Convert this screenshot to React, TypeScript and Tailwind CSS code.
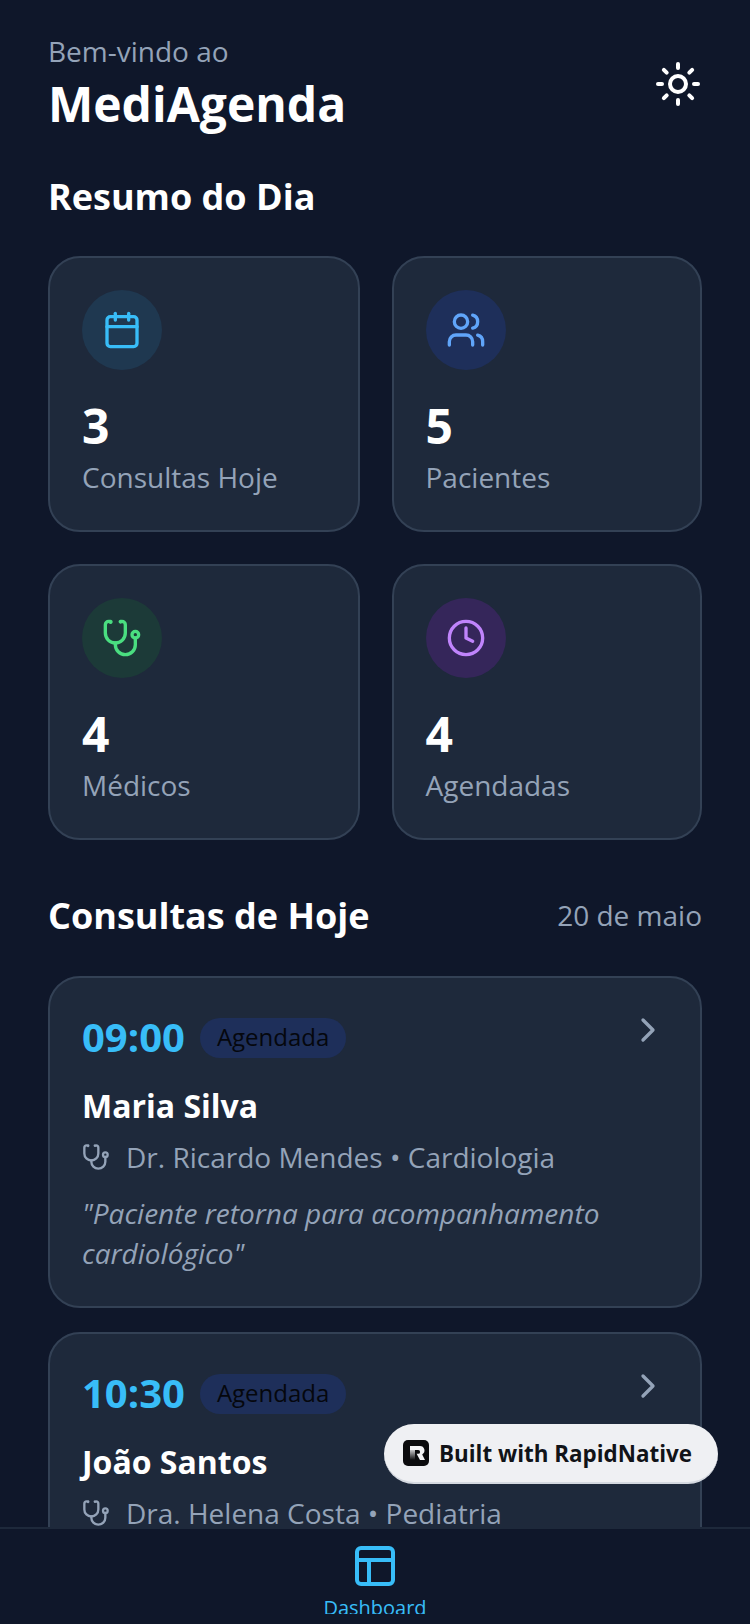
import { Calendar, ChevronRight, Clock, PanelsTopLeft, Sun, Users } from 'lucide-react';
import type { ReactNode } from 'react';

function StethoscopeIcon({ className }: { className: string }) {
  return (
    <svg viewBox="0 0 24 24" fill="none" stroke="currentColor" strokeWidth="2" strokeLinecap="round" strokeLinejoin="round" className={className}>
      <path d="M4.8 2.3A.3.3 0 1 0 5 2H4a2 2 0 0 0-2 2v5a6 6 0 0 0 6 6a6 6 0 0 0 6-6V4a2 2 0 0 0-2-2h-1a.2.2 0 1 0 .3.3" />
      <path d="M8 15v1a6 6 0 0 0 6 6a6 6 0 0 0 6-6v-4" />
      <circle cx="20" cy="10" r="2" />
    </svg>
  );
}

interface StatCardProps {
  icon: ReactNode;
  circle: string;
  value: string;
  label: string;
}

function StatCard({ icon, circle, value, label }: StatCardProps) {
  return (
    <div className="rounded-[32px] border-2 border-[#334155] bg-[#1e293b] p-8">
      <div className={`mb-6 flex h-20 w-20 items-center justify-center rounded-full ${circle}`}>{icon}</div>
      <div className="text-[48px] leading-[64px] font-bold text-white">{value}</div>
      <div className="pb-px text-[28px] leading-[39px] text-[#94a3b8]">{label}</div>
    </div>
  );
}

interface ConsultaProps {
  time: string;
  name: string;
  doctor: string;
  note: string;
}

function ConsultaCard({ time, name, doctor, note }: ConsultaProps) {
  return (
    <div className="mb-6 shrink-0 rounded-[32px] border-2 border-[#334155] bg-[#1e293b] p-8">
      <div className="flex items-start justify-between">
        <div className="flex h-14 items-center gap-[15px]">
          <span className="pb-[3px] text-[40px] leading-[53px] font-bold text-[#38bdf8]">{time}</span>
          <span className="rounded-full bg-[#1e2f5a] px-[17px] pb-[2px] text-[24px] leading-[38px] text-[#05070d]">Agendada</span>
        </div>
        <ChevronRight className="h-10 w-10 text-[#94a3b8]" />
      </div>
      <div className="mt-4 text-[32px] leading-[48px] font-bold text-white">{name}</div>
      <div className="mt-[7px] flex items-center gap-4 text-[28px] leading-[40px] text-[#94a3b8]">
        <StethoscopeIcon className="h-7 w-7" />
        <span>{doctor}</span>
      </div>
      <p className="mt-4 mb-px text-[28px] leading-[40px] text-[#94a3b8] italic">{note}</p>
    </div>
  );
}

export default function App() {
  return (
    <div className="relative flex h-[1624px] w-[750px] flex-col overflow-hidden bg-[#0f172a] font-['Open_Sans',sans-serif]">
      <div className="flex-1 overflow-hidden px-12 pt-[31px]">
        <div className="flex items-center justify-between">
          <div>
            <div className="text-[28px] leading-[40px] text-[#94a3b8]">Bem-vindo ao</div>
            <h1 className="mt-px text-[48px] leading-[64px] font-bold text-white">MediAgenda</h1>
          </div>
          <Sun className="h-12 w-12 text-white" />
        </div>

        <h2 className="mt-[35px] mb-[33px] text-[36px] leading-[52px] font-bold text-white">Resumo do Dia</h2>

        <div className="grid grid-cols-[311.5px_310.5px] gap-8">
          <StatCard icon={<Calendar className="h-10 w-10 text-[#38bdf8]" />} circle="bg-[#1f3850]" value="3" label="Consultas Hoje" />
          <StatCard icon={<Users className="h-10 w-10 text-[#60a5fa]" />} circle="bg-[#1e2f5a]" value="5" label="Pacientes" />
          <StatCard icon={<StethoscopeIcon className="h-10 w-10 text-[#4ade80]" />} circle="bg-[#1c3a38]" value="4" label="Médicos" />
          <StatCard icon={<Clock className="h-10 w-10 text-[#c084fc]" />} circle="bg-[#35265a]" value="4" label="Agendadas" />
        </div>

        <div className="mt-12 mb-8 flex items-center justify-between">
          <h2 className="text-[36px] leading-[56px] font-bold text-white">Consultas de Hoje</h2>
          <span className="pb-[2px] text-[28px] leading-[38px] text-[#94a3b8]">20 de maio</span>
        </div>

        <ConsultaCard
          time="09:00"
          name="Maria Silva"
          doctor="Dr. Ricardo Mendes • Cardiologia"
          note={'"Paciente retorna para acompanhamento cardiológico"'}
        />
        <ConsultaCard
          time="10:30"
          name="João Santos"
          doctor="Dra. Helena Costa • Pediatria"
          note={'"Consulta de rotina"'}
        />
      </div>

      <div className="flex h-[97px] shrink-0 flex-col items-center overflow-hidden border-t-2 border-[#1e293b] bg-[#0f172a] pt-[13px]">
        <PanelsTopLeft className="h-12 w-12 shrink-0 text-[#38bdf8]" />
        <span className="mt-1 block h-5 shrink-0 overflow-hidden text-[20px] leading-[28px] text-[#38bdf8]">Dashboard</span>
      </div>

      <div className="absolute top-[1424px] left-[384px] flex h-[60px] w-[334px] items-center gap-[10px] rounded-full border-b-2 border-[#d5d9e0] bg-[#eff0f3] pl-[19px]">
        <svg viewBox="0 0 26 26" className="h-[26px] w-[26px]">
          <defs>
            <linearGradient id="stem" x1="0" y1="0" x2="0" y2="1">
              <stop offset="0.3" stopColor="#f4f4f6" />
              <stop offset="1" stopColor="#0b0b0d" />
            </linearGradient>
          </defs>
          <rect width="26" height="26" rx="5" fill="#0b0b0d" />
          <path d="M7 6h10a4.5 4.5 0 0 1 2.2 8.4L22 20h-5l-3.4-6.2h1.6a1.4 1.4 0 0 0 0-3.8H7z" fill="#f4f4f6" />
          <path d="M7 6h5v14H7z" fill="url(#stem)" opacity="0.8" />
        </svg>
        <span className="pt-[2px] text-[22.4px] leading-[30px] font-bold text-[#111318]">Built with RapidNative</span>
      </div>
    </div>
  );
}
